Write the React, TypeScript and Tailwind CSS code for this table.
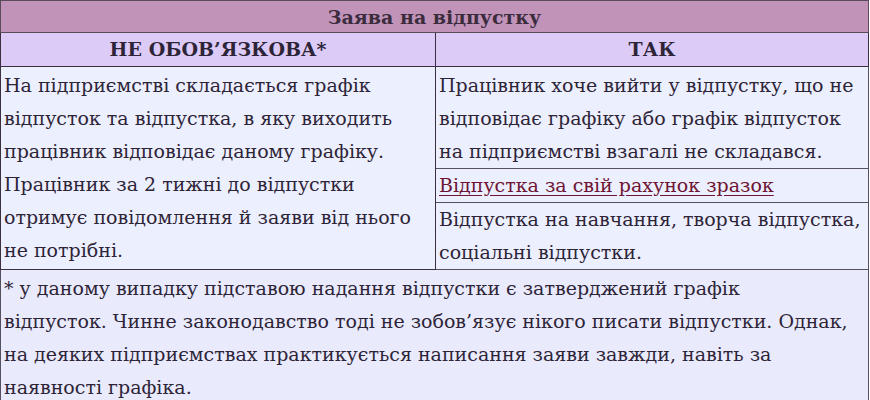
const serif = { fontFamily: '"DejaVu Serif", "Liberation Serif", serif' }

export default function App() {
  return (
    <div className="w-[870px] h-[400px] overflow-hidden bg-white" style={serif}>
      <table className="w-[869px] border-collapse text-[19px] leading-[33px] text-[#2e2438] table-fixed">
        <colgroup>
          <col className="w-[435px]" />
          <col />
        </colgroup>
        <tbody>
          <tr>
            <th colSpan={2} className="h-[32px] p-0 bg-[#c193b9] border border-[#5a4a5a] font-bold text-[#3a2c3c] leading-[30px]">
              Заява на відпустку
            </th>
          </tr>
          <tr>
            <th className="h-[34px] p-0 bg-[#dccbf7] border border-[#3a3040] font-bold text-[#2e2438]">
              НЕ ОБОВ’ЯЗКОВА*
            </th>
            <th className="h-[34px] p-0 bg-[#dccbf7] border border-[#3a3040] font-bold text-[#2e2438]">
              ТАК
            </th>
          </tr>
          <tr>
            <td rowSpan={3} className="align-top px-[3px] pt-[2px] pb-0 bg-[#eceffd] border border-[#3a3040] font-normal">
              На підприємстві складається графік відпусток та відпустка, в яку виходить працівник відповідає даному графіку. Працівник за 2 тижні до відпустки отримує повідомлення й заяви від нього не потрібні.
            </td>
            <td className="align-top px-[3px] pt-[2px] pb-0 bg-[#eceffd] border border-[#555060]">
              Працівник хоче вийти у відпустку, що не відповідає графіку або графік відпусток на підприємстві взагалі не складався.
            </td>
          </tr>
          <tr>
            <td className="align-top px-[3px] pt-0 pb-0 bg-[#eceffd] border border-[#555060]">
              <a href="#" className="text-[#6e1434] underline underline-offset-[3px]">
                Відпустка за свій рахунок зразок
              </a>
            </td>
          </tr>
          <tr>
            <td className="align-top px-[3px] pt-0 pb-0 bg-[#eceffd] border border-[#555060]">
              Відпустка на навчання, творча відпустка, соціальні відпустки.
            </td>
          </tr>
          <tr>
            <td colSpan={2} className="align-top px-[3px] pt-[2px] pb-0 bg-[#e9ebfc] border border-[#555060]">
              * у даному випадку підставою надання відпустки є затверджений графік
              <br />
              відпусток. Чинне законодавство тоді не зобов’язує нікого писати відпустки. Однак,
              <br />
              на деяких підприємствах практикується написання заяви завжди, навіть за
              <br />
              наявності графіка.
            </td>
          </tr>
        </tbody>
      </table>
    </div>
  )
}
